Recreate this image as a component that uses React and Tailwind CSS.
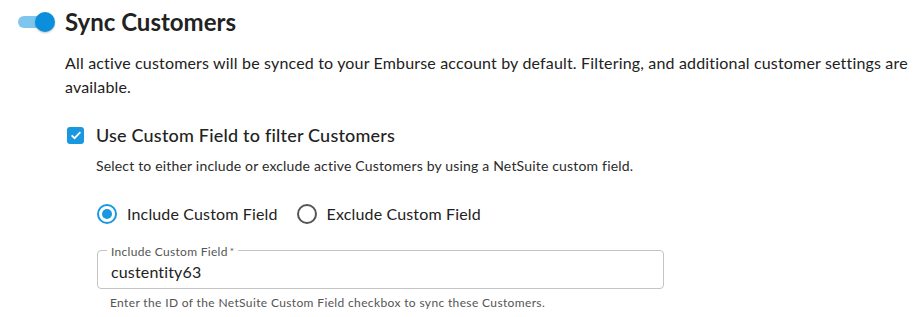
import React, { useState } from 'react'

const App = () => {
  const [synced, setSynced] = useState(true)
  const [useField, setUseField] = useState(true)
  const [mode, setMode] = useState('include')
  const [value, setValue] = useState('custentity63')

  return (
    <div className="w-[914px] h-[317px] bg-white text-[#222] font-['Lato','Noto_Sans',sans-serif] overflow-hidden">
      {/* Header with toggle */}
      <div className="flex items-center pl-[18px] pt-[6px]">
        <button
          onClick={() => setSynced(!synced)}
          className="relative w-[37px] h-[20px] flex items-center"
        >
          <span className={`w-[34px] h-[12px] rounded-full ${synced ? 'bg-[#7fc6ee]' : 'bg-[#bdbdbd]'}`}></span>
          <span
            className={`absolute top-0 w-[20px] h-[20px] rounded-full shadow-[0_1px_2px_rgba(0,0,0,0.25)] ${
              synced ? 'left-[17px] bg-[#0b8fdc]' : 'left-0 bg-[#f5f5f5]'
            }`}
          ></span>
        </button>
        <h1 className="ml-[10px] text-[24px] leading-[32px] font-bold text-[#222]">Sync Customers</h1>
      </div>

      <div className="pl-[65px] pr-[4px]">
        <p className="mt-[13px] text-[16px] leading-[24px] tracking-[0.17px] text-[#222]">
          All active customers will be synced to your Emburse account by default. Filtering, and additional customer settings are available.
        </p>

        {/* Custom field checkbox */}
        <label className="mt-[24px] flex items-center h-[24px] cursor-pointer">
          <span
            onClick={() => setUseField(!useField)}
            className={`ml-[2px] w-[17px] h-[17px] rounded-[3px] flex items-center justify-center ${
              useField ? 'bg-[#1a98df]' : 'border-2 border-[#757575]'
            }`}
          >
            {useField && (
              <svg viewBox="0 0 24 24" className="w-[14px] h-[14px]">
                <path d="M4.5 12.5l5 5L19.5 7" fill="none" stroke="white" strokeWidth="3" />
              </svg>
            )}
          </span>
          <span className="ml-[12px] text-[18px] leading-[24px] tracking-[0.2px] font-medium text-[#222]">
            Use Custom Field to filter Customers
          </span>
        </label>

        <div className="pl-[31px]">
          <p className="mt-[9px] text-[14px] leading-[20px] tracking-[0.18px] text-[#2b2b2b]">
            Select to either include or exclude active Customers by using a NetSuite custom field.
          </p>

          {/* Radios */}
          <div className="mt-[26px] flex items-center h-[24px]">
            {[
              ['include', 'Include Custom Field'],
              ['exclude', 'Exclude Custom Field'],
            ].map(([key, label]) => (
              <label
                key={key}
                onClick={() => setMode(key)}
                className="flex items-center mr-[18px] cursor-pointer"
              >
                <span
                  className={`ml-[1px] w-[20px] h-[20px] rounded-full border-2 flex items-center justify-center ${
                    mode === key ? 'border-[#1a98df]' : 'border-[#555]'
                  }`}
                >
                  {mode === key && <span className="w-[10px] h-[10px] rounded-full bg-[#1a98df]"></span>}
                </span>
                <span className="ml-[10px] text-[16px] leading-[24px] tracking-[0.15px] text-[#222]">{label}</span>
              </label>
            ))}
          </div>

          {/* Outlined input */}
          <div className="relative mt-[24px] ml-[1px] w-[567px] h-[39px] border border-[#c4c4c4] rounded-[4px]">
            <span className="absolute -top-[8px] left-[9px] px-[4px] bg-white text-[12px] leading-[16px] tracking-[0.3px] text-[#555]">
              Include Custom Field<span className="text-[10px] ml-[2px] align-[1px]">*</span>
            </span>
            <input
              value={value}
              onChange={(e) => setValue(e.target.value)}
              className="w-full h-full pl-[13px] pt-[4px] text-[16px] tracking-[0.15px] text-[#222] outline-none bg-transparent"
            />
          </div>
          <p className="mt-[6px] pl-[14px] text-[12px] leading-[16px] tracking-[0.36px] text-[#555]">
            Enter the ID of the NetSuite Custom Field checkbox to sync these Customers.
          </p>
        </div>
      </div>
    </div>
  )
}

export default App
